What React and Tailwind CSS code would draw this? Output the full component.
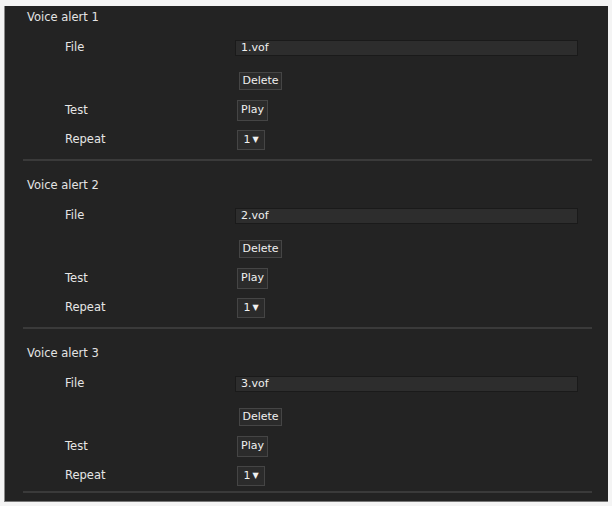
const alerts = [
  { id: 1, file: "1.vof" },
  { id: 2, file: "2.vof" },
  { id: 3, file: "3.vof" },
];

function Btn({ children, w }) {
  return (
    <div
      className={`${w} h-full flex items-center justify-center bg-[#2b2b2b] border border-[#454545] text-[#f0f0f0] text-[11px]`}
    >
      {children}
    </div>
  );
}

function Row({ label, h, mt, children }) {
  return (
    <div className={`flex items-center ${h} ${mt}`}>
      <div className="w-[232px] pl-[60px] text-[11.5px] text-[#e6e6e6]">{label}</div>
      <div className="flex-1 h-full flex">{children}</div>
    </div>
  );
}

function Section({ id, file, first, last }) {
  return (
    <div className={first ? "" : "mt-[13px]"}>
      <div className="h-[24px] flex items-center pl-[22px] text-[11.5px] text-[#e4e4e4]">
        Voice alert {id}
      </div>
      <Row label="File" h="h-[16px]" mt="mt-[10px]">
        <div className="ml-[-2px] w-[343px] h-full flex items-center pl-[5px] bg-[#2d2d2d] border border-[#1a1a1a] text-[11px] text-[#f0f0f0]">
          {file}
        </div>
      </Row>
      <Row label="" h="h-[18px]" mt="mt-[16px]">
        <div className="ml-[2px] h-full flex">
          <Btn w="w-[43px]">Delete</Btn>
        </div>
      </Row>
      <Row label="Test" h="h-[21px]" mt="mt-[10px]">
        <Btn w="w-[31px]">Play</Btn>
      </Row>
      <Row label="Repeat" h="h-[20px]" mt="mt-[9px]">
        <Btn w="w-[28px]">
          <span>1</span>
          <span className="ml-[2px] text-[8px]">▼</span>
        </Btn>
      </Row>
      <div
        className={`${last ? "mt-[5px]" : "mt-[9px]"} ml-[18px] mr-[16px] h-[2px] bg-[#3a3a3a]`}
      />
    </div>
  );
}

export default function App() {
  return (
    <div
      className="w-[612px] h-[506px] bg-[#f4f4f4] pt-[6px] pl-[4px]"
      style={{ fontFamily: '"DejaVu Sans", Verdana, sans-serif' }}
    >
      <div className="w-[604px] h-[496px] bg-[#232323] border-l border-[#8a8a8a] border-b border-b-[#777]">
        {alerts.map((a, i) => (
          <Section
            key={a.id}
            id={a.id}
            file={a.file}
            first={i === 0}
            last={i === alerts.length - 1}
          />
        ))}
      </div>
    </div>
  );
}
